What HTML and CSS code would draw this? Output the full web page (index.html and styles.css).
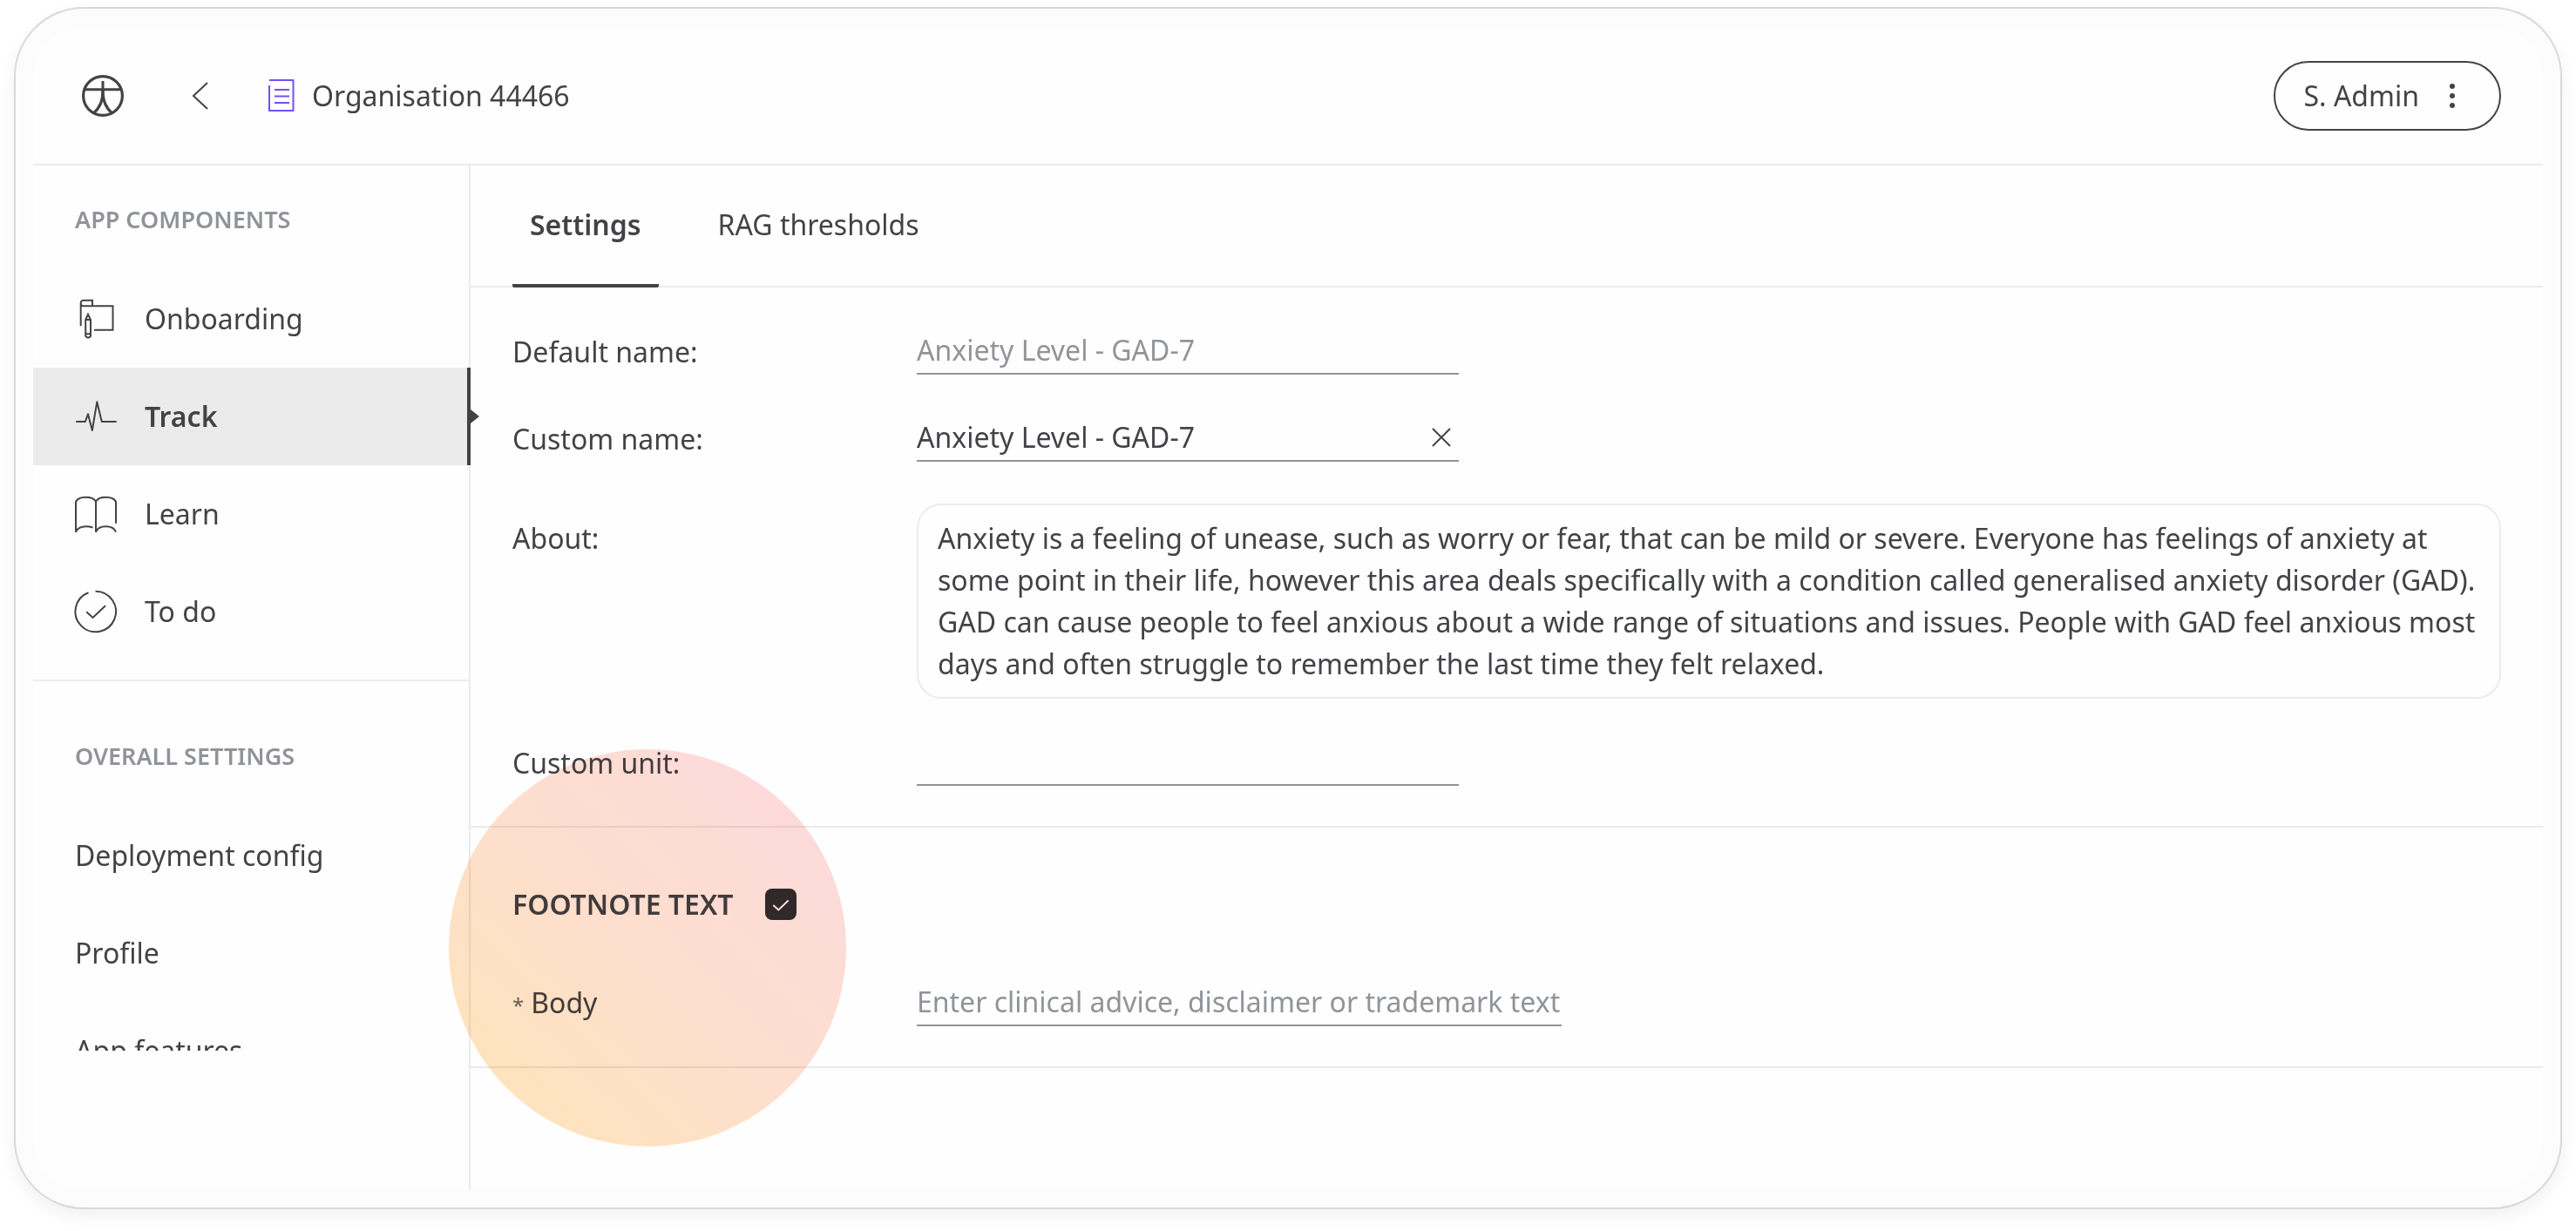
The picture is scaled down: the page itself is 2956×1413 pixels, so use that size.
FILE: index.html
```html
<!DOCTYPE html>
<html lang="en">
<head>
  <meta charset="utf-8">
  <meta name="viewport" content="width=device-width, initial-scale=1">
  <title>Organisation 44466 – Track settings</title>
  <link rel="stylesheet" href="styles.css">
</head>
<body>
  <div class="frame">
    <div class="app">
      <header class="topbar">
        <a class="logo" href="#" aria-label="Home">
          <svg width="64" height="64" viewBox="0 0 64 64" fill="none" stroke="currentColor" stroke-width="3.2">
            <circle cx="32" cy="32" r="22.4"/>
            <path d="M11 24.7H53M32 15V30" stroke-width="3"/>
            <path d="M32 25C32 39 28 46 21.5 52M32 25C32 39 36 46 42.500 52"/>
          </svg>
        </a>
        <button class="icon-button back" type="button" aria-label="Back">
          <svg width="48" height="48" viewBox="0 0 48 48" fill="none" stroke="currentColor" stroke-width="2">
            <path d="M32 9L16 24L32 39"/>
          </svg>
        </button>
        <div class="crumb">
          <svg class="doc-icon" width="44" height="44" viewBox="0 0 44 44" fill="none" stroke="currentColor" stroke-width="2">
            <path d="M7 4H34.500V39H7V10" stroke-linejoin="round"/>
            <path d="M13 15H30M13 22.500H30M13 30H30"/>
          </svg>
          <span>Organisation 44466</span>
        </div>
        <button class="user-button" type="button">
          <span>S. Admin</span>
          <svg width="48" height="48" viewBox="0 0 48 48" fill="currentColor" aria-hidden="true">
            <circle cx="24" cy="13" r="3"/><circle cx="24" cy="24" r="3"/><circle cx="24" cy="35" r="3"/>
          </svg>
        </button>
      </header>

      <div class="body">
        <aside class="sidebar">
          <nav class="sidebar-scroll">
            <section class="nav-section">
              <h2 class="nav-heading">APP COMPONENTS</h2>
              <a class="nav-item" href="#">
                <svg width="48" height="48" viewBox="0 0 48 48">
                  <path d="M6.700 32.300V6C6.700 4 7.700 2.800 10 2.800H20V9.300M6.700 6.500C6.700 8.500 7.700 9.300 9.500 9.300H43.500V36.700H22"/>
                  <path d="M12.200 25L15 18.800L18 25V43C18 46.300 12.200 46.300 12.200 43ZM12.200 25H18M12.200 41.300H18"/>
                </svg>
                Onboarding
              </a>
              <a class="nav-item is-active" href="#" aria-current="page">
                <svg width="48" height="48" viewBox="0 0 48 48">
                  <path d="M1.200 30H11.800L15 21.300L19.800 40L25.300 7.300L30.800 30H47.700" stroke-linejoin="round"/>
                </svg>
                Track
              </a>
              <a class="nav-item" href="#">
                <svg width="48" height="48" viewBox="0 0 48 48">
                  <path d="M1 44.700V10C4 3 20 3 24 9.500C28 3 44 3 47 10V34.700"/>
                  <path d="M24 9.500V44.700C27 36 44 36 47 44.700M1 44.700C3 38 13 37 20.500 39.500"/>
                </svg>
                Learn
              </a>
              <a class="nav-item" href="#">
                <svg width="48" height="48" viewBox="0 0 48 48">
                  <path d="M23.500 .700A23.300 23.300 0 1 1 15.500 2.200"/>
                  <path d="M13.200 24.300L20.500 31L35 17.300"/>
                </svg>
                To do
              </a>
            </section>
            <section class="nav-section">
              <h2 class="nav-heading">OVERALL SETTINGS</h2>
              <a class="nav-item" href="#">Deployment config</a>
              <a class="nav-item" href="#">Profile</a>
              <a class="nav-item" href="#">App features</a>
            </section>
          </nav>
        </aside>

        <main class="content">
          <nav class="tabs">
            <a class="tab is-active" href="#" aria-current="page">Settings</a>
            <a class="tab" href="#">RAG thresholds</a>
          </nav>

          <section class="panel details">
            <div class="row">
              <label for="default-name">Default name:</label>
              <div class="line-field">
                <input id="default-name" class="is-muted" type="text" value="Anxiety Level - GAD-7" readonly>
              </div>
            </div>
            <div class="row">
              <label for="custom-name">Custom name:</label>
              <div class="line-field">
                <input id="custom-name" type="text" value="Anxiety Level - GAD-7">
                <button class="icon-button clear" type="button" aria-label="Clear custom name">
                  <svg width="40" height="40" viewBox="0 0 40 40" fill="none" stroke="currentColor" stroke-width="2">
                    <path d="M10 10L30 30M30 10L10 30"/>
                  </svg>
                </button>
              </div>
            </div>
            <div class="row row-top">
              <label for="about">About:</label>
              <textarea id="about" class="about" rows="4">Anxiety is a feeling of unease, such as worry or fear, that can be mild or severe. Everyone has feelings of anxiety at some point in their life, however this area deals specifically with a condition called generalised anxiety disorder (GAD). GAD can cause people to feel anxious about a wide range of situations and issues. People with GAD feel anxious most days and often struggle to remember the last time they felt relaxed.</textarea>
            </div>
            <div class="row">
              <label for="custom-unit">Custom unit:</label>
              <div class="line-field">
                <input id="custom-unit" type="text">
              </div>
            </div>
          </section>

          <section class="panel footnote">
            <div class="footnote-head">
              <label for="footnote-on">FOOTNOTE TEXT</label>
              <input id="footnote-on" class="checkbox" type="checkbox" checked>
            </div>
            <div class="row">
              <label class="required" for="footnote-body"><span class="asterisk">*</span>Body</label>
              <div class="line-field is-wide">
                <input id="footnote-body" type="text" placeholder="Enter clinical advice, disclaimer or trademark text">
              </div>
            </div>
            <div class="spotlight" aria-hidden="true"></div>
          </section>
        </main>
      </div>
    </div>
  </div>
</body>
</html>
```

FILE: styles.css
```css
:root {
  --ink: #424347;
  --muted: #909499;
  --line: #ebebeb;
  --accent: #7350f2;
}

* {
  box-sizing: border-box;
}

body {
  margin: 0;
  display: flex;
  min-height: 100vh;
  background: #fff;
  color: var(--ink);
  font: 400 32px/48px "Noto Sans", "Open Sans", sans-serif;
}

a {
  color: inherit;
  text-decoration: none;
}

button,
input,
textarea {
  margin: 0;
  padding: 0;
  border: 0;
  background: none;
  color: inherit;
  font: inherit;
}

button {
  cursor: pointer;
}

svg {
  display: block;
  flex: none;
  overflow: visible;
}

/* Window */
.frame {
  flex: 1;
  min-width: 0;
  display: flex;
  margin: 8px 16px 25px;
  padding: 20px;
  border: 2px solid #d9d9d9;
  border-radius: 80px;
  background: #fcfcfc;
  box-shadow: 0 8px 20px rgba(0, 0, 0, 0.06);
}

.app {
  flex: 1;
  min-width: 0;
  display: flex;
  flex-direction: column;
  border-radius: 58px;
  background: #fefefe;
}

/* Top bar */
.topbar {
  display: flex;
  align-items: center;
  height: 160px;
  padding: 2px 48px 0;
  border-bottom: 2px solid var(--line);
}

.back {
  margin: 0 48px 0 56px;
}

.crumb {
  display: flex;
  align-items: center;
  gap: 12px;
}

.doc-icon {
  color: var(--accent);
}

.user-button {
  display: flex;
  align-items: center;
  gap: 14px;
  height: 80px;
  margin-left: auto;
  padding: 0 30px 0 32px;
  border: 2px solid var(--ink);
  border-radius: 40px;
}

.body {
  flex: 1;
  display: flex;
}

/* Sidebar */
.sidebar {
  flex: none;
  width: 502px;
  border-right: 2px solid var(--line);
}

/* The list is cut at its lower edge; the active marker may stick out sideways */
.sidebar-scroll {
  max-height: 1016px;
  margin-right: -2px;
  overflow-x: visible;
  overflow-y: clip;
}

.nav-section + .nav-section {
  margin-top: 22px;
  margin-right: 2px;
  padding-top: 24px;
  border-top: 2px solid var(--line);
}

.nav-heading {
  margin: 0;
  padding: 42px 48px 38px;
  color: var(--muted);
  font-size: 27px;
  font-weight: 600;
  line-height: 40px;
}

.nav-item {
  position: relative;
  display: flex;
  align-items: center;
  gap: 32px;
  height: 112px;
  padding: 0 48px;
}

.nav-item svg {
  fill: none;
  stroke: currentColor;
  stroke-width: 2;
}

.nav-item.is-active {
  border-right: 4px solid var(--ink);
  background: var(--line);
  font-weight: 600;
}

.nav-item.is-active::after {
  content: "";
  position: absolute;
  top: 48px;
  left: 100%;
  margin-left: 4px;
  border: 8px solid transparent;
  border-left: 10px solid var(--ink);
  border-right: 0;
}

/* Tabs */
.content {
  flex: 1;
  min-width: 0;
}

.tabs {
  display: flex;
  gap: 48px;
  height: 140px;
  padding: 0 48px;
  border-bottom: 2px solid var(--line);
}

.tab {
  height: 140px;
  padding: 44px 20px;
}

.tab.is-active {
  border-bottom: 4px solid var(--ink);
  border-radius: 2px;
  font-weight: 600;
}

/* Form */
.panel {
  display: flex;
  flex-direction: column;
  padding: 48px 48px 46px;
  border-bottom: 2px solid var(--line);
}

.details {
  gap: 48px;
}

.row {
  display: grid;
  grid-template-columns: 464px minmax(0, 1fr);
  align-items: center;
}

.row-top {
  align-items: start;
}

.row-top label {
  padding-top: 16px;
}

.line-field {
  display: flex;
  align-items: center;
  max-width: 622px;
  height: 52px;
  padding-bottom: 2px;
  border-bottom: 2px solid var(--muted);
}

.line-field.is-wide {
  max-width: 740px;
}

.line-field input {
  flex: 1;
  min-width: 0;
  height: 48px;
  outline: 0;
}

.line-field .is-muted,
.line-field input::placeholder {
  color: var(--muted);
  opacity: 1;
}

.about {
  display: block;
  width: 100%;
  height: 224px;
  padding: 14px 22px;
  border: 2px solid var(--line);
  border-radius: 28px;
  outline: 0;
  overflow: hidden;
  resize: none;
}

/* Footnote */
.footnote {
  position: relative;
  gap: 64px;
  padding-top: 64px;
}

.footnote-head {
  display: flex;
  align-items: center;
  gap: 36px;
  font-weight: 600;
}

.checkbox {
  appearance: none;
  width: 36px;
  height: 36px;
  border-radius: 8px;
  background: #2f2f31 url("data:image/svg+xml,%3Csvg xmlns='http://www.w3.org/2000/svg' viewBox='0 0 36 36' fill='none' stroke='white' stroke-width='2'%3E%3Cpath d='M9.300 19L15.300 24.500L26.700 13.500'/%3E%3C/svg%3E");
}

.required {
  display: flex;
  align-items: baseline;
  gap: 8px;
}

.asterisk {
  font-size: 24px;
  opacity: 0.8;
}

.spotlight {
  position: absolute;
  top: -90px;
  left: -25px;
  width: 456px;
  height: 456px;
  border-radius: 50%;
  background: linear-gradient(45deg, #ffe6b8 0%, #ffdfcf 50%, #fedae0 100%);
  mix-blend-mode: multiply;
  pointer-events: none;
}
```
